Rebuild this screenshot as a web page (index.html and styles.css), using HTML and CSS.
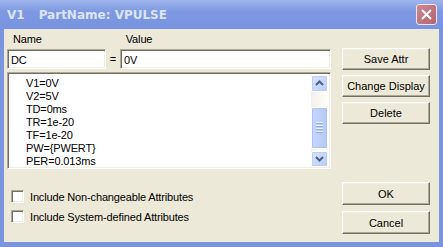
FILE: index.html
```html
<!DOCTYPE html>
<html lang="en">
<head>
    <meta charset="UTF-8">
    <title>V1 PartName: VPULSE</title>
    <link rel="stylesheet" href="styles.css">
</head>
<body>
    <div class="window">
        <!-- Title bar -->
        <div class="titlebar">
            <span class="title">V1</span>
            <span class="title title-part">PartName: VPULSE</span>
            <button class="close">
                <svg width="11" height="11" viewBox="0 0 11 11"><path d="M1 1 L10 10 M10 1 L1 10" stroke="#fff" stroke-width="2"/></svg>
            </button>
        </div>

        <div class="client">
            <div class="left">
                <div class="labels">
                    <span class="lbl-name">Name</span>
                    <span class="lbl-value">Value</span>
                </div>
                <div class="fields">
                    <div class="field field-name">DC</div>
                    <span class="eq">=</span>
                    <div class="field field-value">0V</div>
                </div>
                <div class="listbox">
                    <ul class="items">
                        <li>V1=0V</li>
                        <li>V2=5V</li>
                        <li>TD=0ms</li>
                        <li>TR=1e-20</li>
                        <li>TF=1e-20</li>
                        <li>PW={PWERT}</li>
                        <li>PER=0.013ms</li>
                    </ul>
                    <div class="scrollbar">
                        <div class="sb-btn">
                            <svg width="9" height="6" viewBox="0 0 9 6"><path d="M1 5 L4.5 1.5 L8 5" fill="none" stroke="#4d6185" stroke-width="2"/></svg>
                        </div>
                        <div class="sb-track">
                            <div class="sb-thumb">
                                <span></span><span></span><span></span><span></span>
                            </div>
                        </div>
                        <div class="sb-btn">
                            <svg width="9" height="6" viewBox="0 0 9 6"><path d="M1 1 L4.5 4.5 L8 1" fill="none" stroke="#4d6185" stroke-width="2"/></svg>
                        </div>
                    </div>
                </div>
                <div class="checks">
                    <label class="check"><span class="box"></span>Include Non-changeable Attributes</label>
                    <label class="check"><span class="box"></span>Include System-defined Attributes</label>
                </div>
            </div>

            <div class="right">
                <button class="btn">Save Attr</button>
                <button class="btn">Change Display</button>
                <button class="btn">Delete</button>
                <div class="spacer"></div>
                <button class="btn btn-tall">OK</button>
                <button class="btn btn-tall">Cancel</button>
            </div>
        </div>
    </div>
</body>
</html>
```

FILE: styles.css
```css
body { margin: 0; font-family: "Liberation Sans", Arial, sans-serif; font-size: 11px; letter-spacing: -0.15px; color: #000; }
.window { width: 443px; height: 247px; box-sizing: border-box; padding: 0 4px 5px; background: #7b94de; display: flex; flex-direction: column; }

.titlebar { height: 29px; display: flex; align-items: center; background: linear-gradient(#9fb4ec, #7e99e2 40%, #7893df); margin: 0 -4px; padding: 0 6px 0 7px; }
.title { font-family: "DejaVu Sans", sans-serif; font-weight: bold; font-size: 12px; letter-spacing: 0; color: #dbe4f8; }
.title-part { margin-left: 14px; }
.close { margin-left: auto; width: 21px; height: 21px; padding: 0; border: 1px solid #f2e4e8; border-radius: 3px; background: linear-gradient(135deg, #cc8790, #b4636f); display: flex; align-items: center; justify-content: center; }

.client { flex: 1; background: #ece9d8; display: flex; padding: 0 9px 0 3px; }
.left { width: 324px; display: flex; flex-direction: column; }
.right { margin-left: 11px; flex: 1; display: flex; flex-direction: column; padding-top: 19px; }

.labels { height: 20px; display: flex; align-items: center; }
.lbl-name { margin-left: 6px; }
.lbl-value { margin-left: 84px; }

.fields { display: flex; align-items: center; height: 20px; }
.field { box-sizing: border-box; height: 20px; background: #fff; border: 1px solid; border-color: #aca899 #fff #fff #aca899; box-shadow: inset 1px 1px #716f64, inset -1px -1px #f1efe2; padding: 3px 0 0 3px; line-height: 14px; }
.field-name { width: 99px; }
.eq { width: 14px; text-align: center; }
.field-value { width: 211px; }

.listbox { margin-top: 3px; height: 97px; box-sizing: border-box; background: #fff; border: 1px solid; border-color: #aca899 #fff #fff #aca899; box-shadow: inset 1px 1px #716f64, inset -1px -1px #f1efe2; padding: 2px 2px 1px 2px; display: flex; }
.items { list-style: none; margin: 0; padding: 2px 0 0 16px; flex: 1; }
.items li { height: 13px; line-height: 13px; }

.scrollbar { width: 17px; display: flex; flex-direction: column; background: linear-gradient(90deg, #f3f1ec, #fefefb); }
.sb-btn { box-sizing: border-box; height: 17px; border: 1px solid #fff; border-radius: 2px; background: linear-gradient(135deg, #d9e4fd, #b9cbf7); box-shadow: inset 0 0 0 1px #b8cdf7; display: flex; align-items: center; justify-content: center; }
.sb-track { flex: 1; display: flex; flex-direction: column; padding: 15px 0 2px; }
.sb-thumb { height: 42px; box-sizing: border-box; border: 1px solid #fff; border-radius: 2px; background: linear-gradient(90deg, #c6d5fb, #b5c9f7); box-shadow: inset 0 0 0 1px #adc2f3; display: flex; flex-direction: column; align-items: center; justify-content: center; gap: 1px; }
.sb-thumb span { width: 7px; height: 1px; background: #eef3fe; box-shadow: 0 1px #8faaeb; margin-bottom: 1px; }

.checks { margin-top: 21px; display: flex; flex-direction: column; gap: 7px; }
.check { display: flex; align-items: center; height: 13px; }
.box { box-sizing: border-box; width: 13px; height: 13px; margin: 0 6px 0 4px; background: #fff; border: 1px solid; border-color: #aca899 #fff #fff #aca899; box-shadow: inset 1px 1px #716f64, inset -1px -1px #f1efe2; }

.btn { box-sizing: border-box; height: 22px; width: 88px; margin-bottom: 5px; padding: 0; font: inherit; background: #ece9d8; border: 1px solid; border-color: #fff #716f64 #716f64 #fff; box-shadow: inset -1px -1px #aca899, inset 1px 1px #f1efe2; color: #000; }
.btn-tall { height: 23px; margin-bottom: 6px; }
.spacer { height: 53px; }
```
